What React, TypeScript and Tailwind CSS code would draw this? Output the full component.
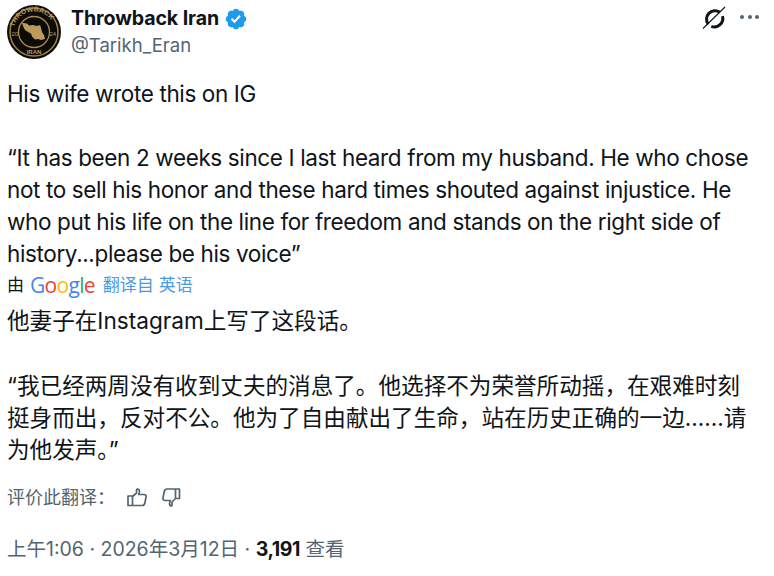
import React from 'react'

const sans = "font-['Inter','Noto_Sans_CJK_SC',sans-serif]"

function Avatar() {
  return (
    <svg width="54" height="54" viewBox="0 0 54 54" className="shrink-0">
      <circle cx="27" cy="27" r="27" fill="#0c0b08" />
      <circle cx="27" cy="27" r="24" fill="none" stroke="#9c8245" strokeWidth="1.5" />
      <circle cx="27" cy="27" r="15.5" fill="none" stroke="#a98d4a" strokeWidth="1.3" />
      <path d="M16 18l4 .5 2 2 4-.5 4 1 3-1 1 3 1 4 2 3 1 4-4 1-3-1-3 .5-3-3-1-3-3-1.500-3-2-2-4-1-3z" fill="#bb9c5a" />
      <path id="arc" d="M6.500 27a20.500 20.500 0 0 1 41 0" fill="none" />
      <text fontSize="7" fontWeight="700" fill="#bb9c5a" fontFamily="Liberation Sans">
        <textPath href="#arc" startOffset="5">THROWBACK</textPath>
      </text>
      <text x="27" y="48.500" fontSize="6" fontWeight="700" fill="#bb9c5a" textAnchor="middle" fontFamily="Liberation Sans">IRAN</text>
      <text x="4.500" y="31" fontSize="6" fill="#bb9c5a" fontFamily="Liberation Sans">20</text>
      <text x="42.500" y="31" fontSize="6" fill="#bb9c5a" fontFamily="Liberation Sans">24</text>
    </svg>
  )
}

function Verified() {
  return (
    <svg width="24" height="24" viewBox="0 0 22 22">
      <path fill="#1d9bf0" d="M20.396 11c-.018-.646-.215-1.275-.57-1.816-.354-.54-.852-.972-1.438-1.246.223-.607.27-1.264.14-1.897-.131-.634-.437-1.218-.882-1.687-.47-.445-1.053-.75-1.687-.882-.633-.13-1.29-.083-1.897.14-.273-.587-.704-1.086-1.245-1.44S11.647 1.62 11 1.604c-.646.017-1.273.213-1.813.568s-.969.854-1.24 1.44c-.608-.223-1.267-.272-1.902-.14-.635.13-1.22.436-1.69.882-.445.47-.749 1.055-.878 1.688-.13.633-.08 1.29.144 1.896-.587.274-1.087.705-1.443 1.245-.356.54-.555 1.17-.574 1.817.02.647.218 1.276.574 1.817.356.54.856.972 1.443 1.245-.224.606-.274 1.263-.144 1.896.13.634.433 1.218.877 1.688.47.443 1.054.747 1.687.878.633.132 1.29.084 1.897-.136.274.586.705 1.084 1.246 1.439.54.354 1.17.551 1.816.569.647-.016 1.276-.213 1.817-.567s.972-.854 1.245-1.44c.604.239 1.266.296 1.903.164.636-.132 1.22-.447 1.68-.907.46-.46.776-1.044.908-1.681s.075-1.299-.165-1.903c.586-.274 1.084-.705 1.439-1.246.354-.54.551-1.17.569-1.816z" />
      <path fill="#fff" d="M9.662 14.85l-3.429-3.428 1.293-1.302 2.072 2.072 4.4-4.794 1.347 1.246z" />
    </svg>
  )
}

function Grok() {
  return (
    <svg width="24" height="26" viewBox="0 0 24 26" fill="none">
      <path d="M17.800 8.200A8.500 8.500 0 0 0 6.200 20.300" stroke="#0f1419" strokeWidth="3" />
      <path d="M20.500 12.200A8.500 8.500 0 0 1 9.300 22.400" stroke="#0f1419" strokeWidth="3" />
      <path d="M1 24.500L23 3" stroke="#0f1419" strokeWidth="1.100" />
    </svg>
  )
}

function ThumbUp() {
  return (
    <svg width="20" height="19" viewBox="0 0 20 19" fill="none" stroke="#536471" strokeWidth="1.700" strokeLinejoin="round">
      <path d="M1 8h4.500v9.500H1zM5.500 8.500l4-3.500V2c0-1.500 3-1.200 3 1 0 1.400-.5 2.600-.8 3.500h5.300c1.500 0 2.300 1.200 2 2.400l-1 5.600c-.3 1.800-1.200 3-2.800 3H5.500" />
    </svg>
  )
}

function ThumbDown() {
  return (
    <svg width="19" height="19" viewBox="0 0 19 19" fill="none" stroke="#536471" strokeWidth="1.700" strokeLinejoin="round">
      <path d="M17.500 10.500H13.500V1h4zM13.500 10.500l-3.500 3.500v3c0 1.500-2.500 1.200-2.500-1 0-1.400.5-2.600.8-3.500H3c-1.500 0-2.300-1.200-2-2.400l1-5.600C2.300 2.700 3.200 1 5 1h8.500" />
    </svg>
  )
}

export default function App() {
  return (
    <div className={`${sans} w-[774px] h-[576px] overflow-hidden bg-white pl-[7px] pr-3 pt-[5px] text-[#0f1419]`}>
      <header className="flex items-start">
        <Avatar />
        <div className="ml-[10px] flex-1">
          <div className="flex items-center gap-[5px] h-[27px]">
            <span className="text-[19.6px] font-bold tracking-[-0.1px]">Throwback Iran</span>
            <Verified />
          </div>
          <div className="text-[18.5px] leading-[26px] text-[#536471]">@Tarikh_Eran</div>
        </div>
        <div className="flex items-center gap-[14px] pr-[3px] -mt-px">
          <Grok />
          <div className="flex gap-[3.3px]">
            <span className="size-[4px] rounded-full bg-[#536471]" />
            <span className="size-[4px] rounded-full bg-[#536471]" />
            <span className="size-[4px] rounded-full bg-[#536471]" />
          </div>
        </div>
      </header>

      <div className="mt-[19px] text-[22.5px] leading-[32px] tracking-[-0.37px]">
        <p>His wife wrote this on IG</p>
        <p className="mt-[32px]">“It has been 2 weeks since I last heard from my husband. He who chose not to sell his honor and these hard times shouted against injustice. He who put his life on the line for freedom and stands on the right side of history...please be his voice”</p>
      </div>

      <div className="flex items-center h-[28px] mt-[2px] text-[17px]">
        <span>由</span>
        <span className="ml-[6px] -mt-[2px] text-[21px] font-['Open_Sans',sans-serif] tracking-[-0.7px] leading-none">
          <span className="text-[#4285f4]">G</span>
          <span className="text-[#ea4335]">o</span>
          <span className="text-[#fbbc05]">o</span>
          <span className="text-[#4285f4]">g</span>
          <span className="text-[#34a853]">l</span>
          <span className="text-[#ea4335]">e</span>
        </span>
        <span className="ml-[8px] text-[#4a99e9]">翻译自 英语</span>
      </div>

      <div className="mt-[5px] text-[22.6px] leading-[32px]">
        <p>他妻子在Instagram上写了这段话。</p>
        <p className="mt-[33px]">“我已经两周没有收到丈夫的消息了。他选择不为荣誉所动摇，在艰难时刻挺身而出，反对不公。他为了自由献出了生命，站在历史正确的一边......请为他发声。”</p>
      </div>

      <div className="flex items-center mt-[19px] h-[24px] text-[#536471]">
        <span className="text-[18px]">评价此翻译：</span>
        <span className="ml-[12px]"><ThumbUp /></span>
        <span className="ml-[15px]"><ThumbDown /></span>
      </div>

      <div className="mt-[28px] text-[19.5px] leading-[24px] text-[#536471]">
        上午1:06 · 2026年3月12日 · <span className="font-bold tracking-[-0.4px] text-[#0f1419]">3,191</span> 查看
      </div>
    </div>
  )
}
